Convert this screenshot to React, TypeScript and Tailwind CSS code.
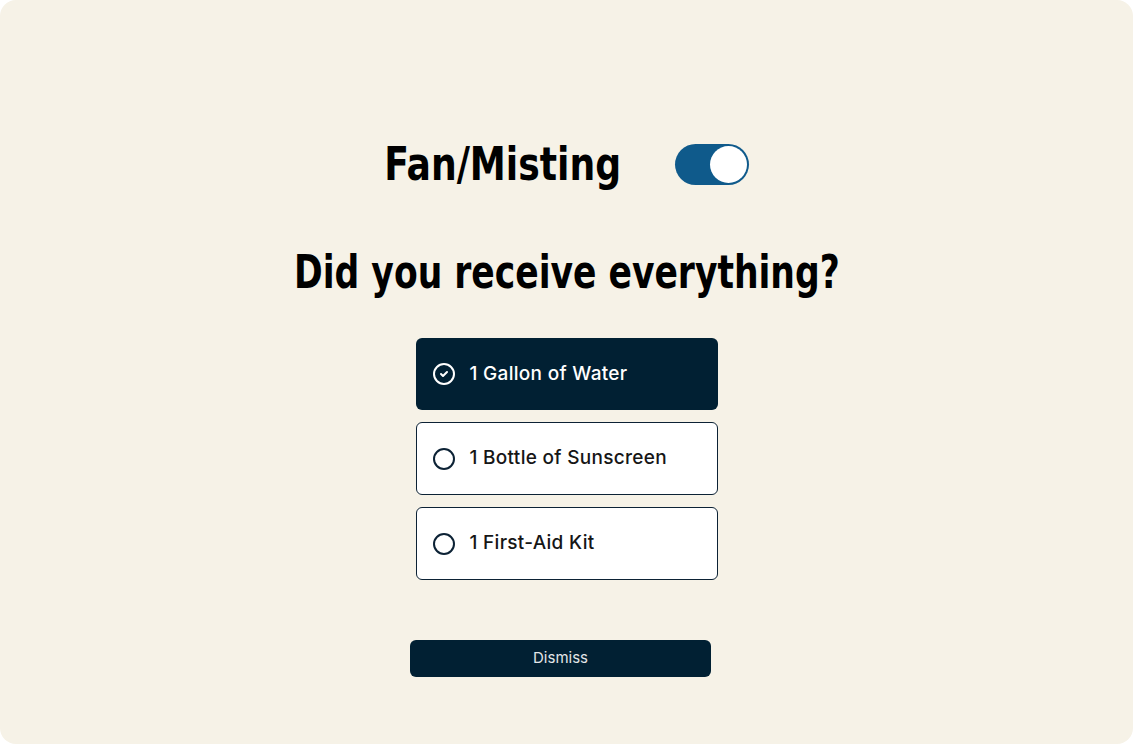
import { CircleCheck, Circle } from 'lucide-react';

const items = [
  { label: '1 Gallon of Water', checked: true },
  { label: '1 Bottle of Sunscreen', checked: false },
  { label: '1 First-Aid Kit', checked: false },
];

export default function App() {
  return (
    <div className="w-[1133px] h-[744px] bg-white">
      <div className="h-full rounded-[16px] bg-[#f6f2e7] flex flex-col items-center pt-[140px]">
        {/* Toggle row */}
        <div className="flex items-center gap-[53px]">
          <h2 className="-ml-[40px] origin-right scale-x-[0.855] whitespace-nowrap text-[47px] leading-[48px] font-bold text-black [font-stretch:condensed] [font-family:'DejaVu_Sans',sans-serif]">
            Fan/Misting
          </h2>
          <div className="w-[74px] h-[41px] rounded-full bg-[#0f5a8b] flex items-center justify-end pr-[2px]">
            <div className="w-[37px] h-[37px] rounded-full bg-white" />
          </div>
        </div>

        <h1 className="mt-[56px] scale-x-[0.817] whitespace-nowrap text-[47px] leading-[56px] font-bold text-black [font-stretch:condensed] [font-family:'DejaVu_Sans',sans-serif]">
          Did you receive everything?
        </h1>

        {/* Checklist */}
        <div className="mt-[38px] flex flex-col gap-[12px] w-[302px]">
          {items.map((item) =>
            item.checked ? (
              <div
                key={item.label}
                className="h-[72px] rounded-[6px] bg-[#012033] flex items-center gap-[14px] px-[16px] text-white"
              >
                <CircleCheck size={24} strokeWidth={2} />
                <span className="text-[19px] tracking-[0.3px] font-medium [font-family:Inter,sans-serif]">{item.label}</span>
              </div>
            ) : (
              <div
                key={item.label}
                className="h-[73px] rounded-[6px] bg-white border border-[#0c2235] flex items-center gap-[14px] px-[15px] text-[#161616]"
              >
                <Circle size={24} strokeWidth={2} className="text-[#0c2235]" />
                <span className="text-[19px] tracking-[0.3px] font-medium [font-family:Inter,sans-serif]">{item.label}</span>
              </div>
            )
          )}
        </div>

        <button className="mt-[60px] mr-[12px] w-[301px] h-[37px] rounded-[6px] bg-[#012033] text-[#e3e6e8] text-[15px] [font-family:Inter,sans-serif]">
          Dismiss
        </button>
      </div>
    </div>
  );
}
